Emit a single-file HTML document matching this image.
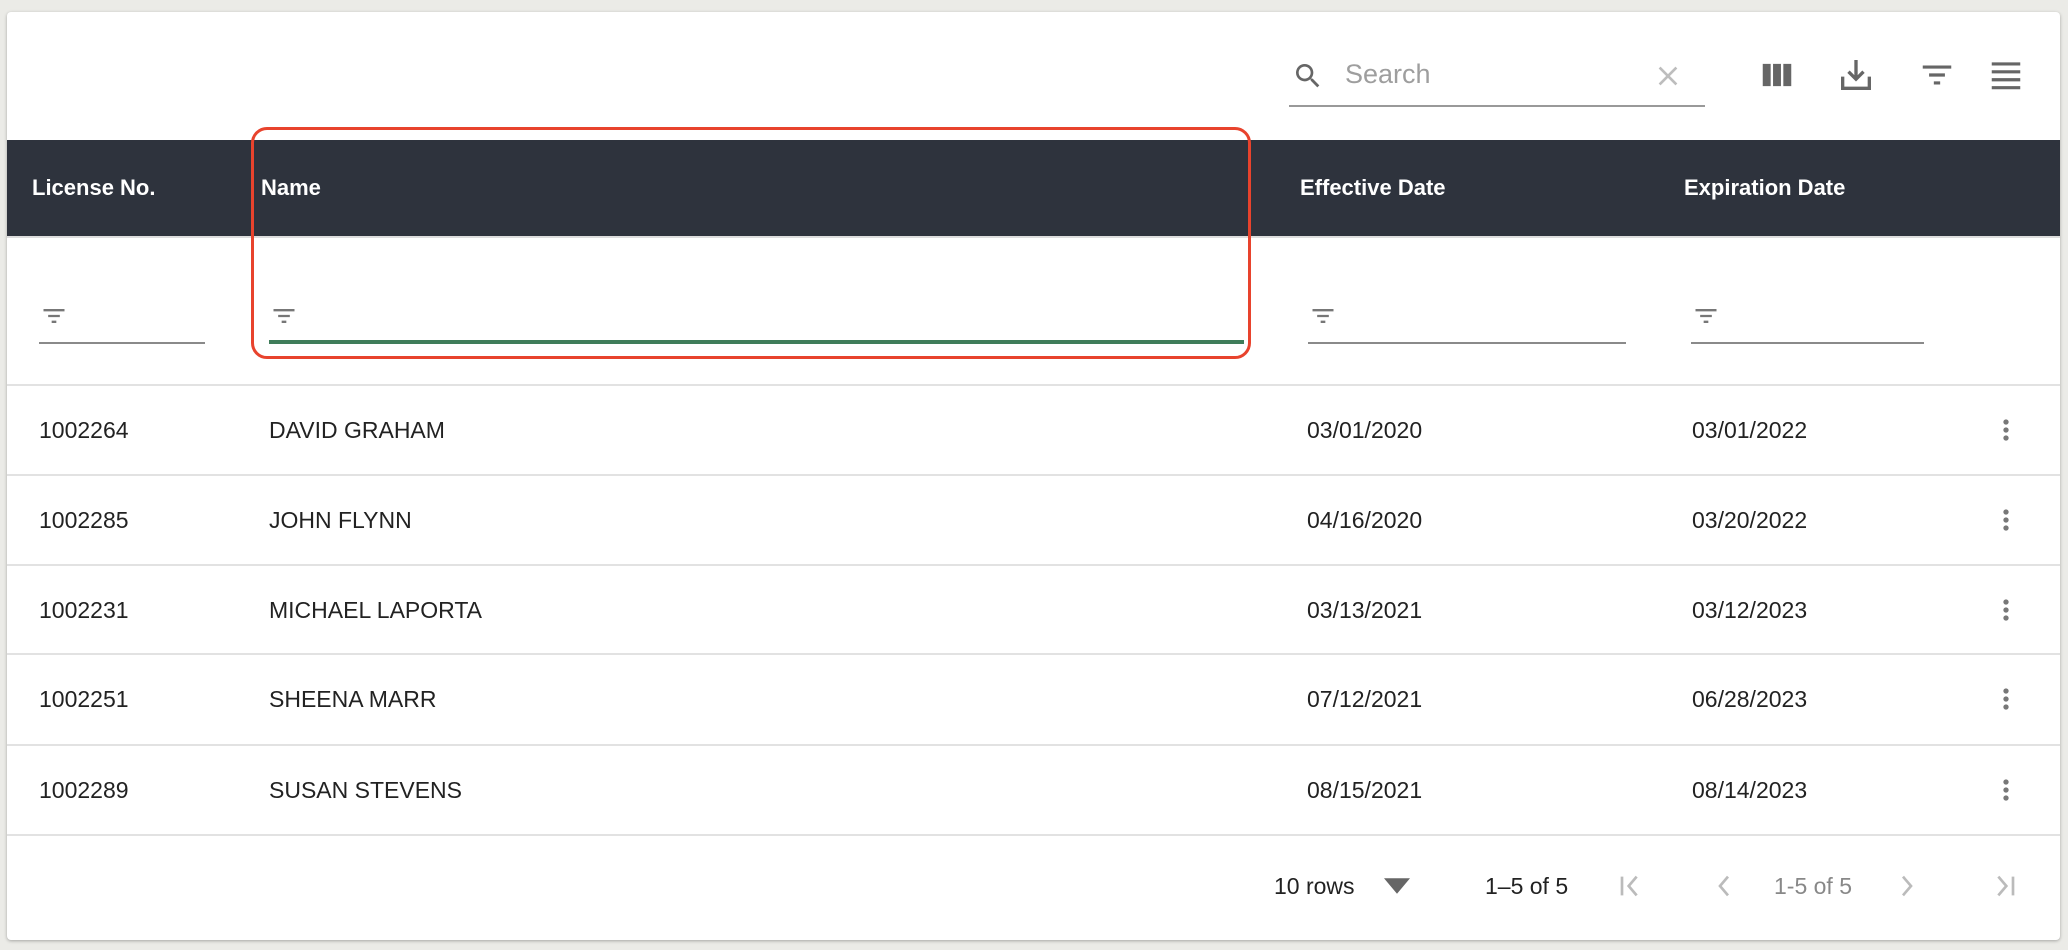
<!DOCTYPE html>
<html><head><style>
*{margin:0;padding:0;box-sizing:border-box}
body{width:2068px;height:950px;background:#ebebe7;font-family:"Liberation Sans",Arial,sans-serif;position:relative;overflow:hidden}
.card{position:absolute;left:7px;top:12px;width:2053px;height:928px;background:#fff;border-radius:4px;box-shadow:0 1px 3px rgba(0,0,0,.3)}
.a{position:absolute}
.hd{position:absolute;left:7px;top:140px;width:2053px;height:96px;background:#2e333d}
.ht{position:absolute;top:176px;color:#fff;font-weight:bold;font-size:22px;line-height:24px}
.dt{position:absolute;font-size:23px;color:#222;line-height:24px}
.sep{position:absolute;left:7px;width:2053px;height:2px;background:#e2e2e2}
.ul{position:absolute;top:342px;height:2px;background:#8a8a8a}
.pg{position:absolute;top:873px;font-size:23px;line-height:26px}
</style></head><body>
<div class="card"></div>
<!-- toolbar -->
<svg class="a" style="left:1292px;top:60px" width="32" height="32" viewBox="0 0 24 24"><path fill="#666" d="M15.5 14h-.79l-.28-.27A6.47 6.47 0 0016 9.5 6.5 6.5 0 109.5 16c1.61 0 3.09-.59 4.23-1.57l.27.28v.79l5 4.99L20.49 19l-4.99-5zm-6 0C7.01 14 5 11.99 5 9.5S7.01 5 9.5 5 14 7.01 14 9.5 11.99 14 9.5 14z"/></svg>
<div class="a" style="left:1345px;top:59px;font-size:27px;color:#9e9e9e">Search</div>
<svg class="a" style="left:1652px;top:60px" width="32" height="32" viewBox="0 0 24 24"><path fill="#bdbdbd" d="M19 6.41L17.59 5 12 10.59 6.41 5 5 6.41 10.59 12 5 17.59 6.41 19 12 13.41 17.59 19 19 17.59 13.41 12z"/></svg>
<div class="a" style="left:1289px;top:105px;width:416px;height:2px;background:#999"></div>
<svg class="a" style="left:1758px;top:56px" width="38" height="38" viewBox="0 0 24 24"><path fill="#666" d="M3 5h5v14H3zM9.5 5h5v14h-5zM16 5h5v14h-5z"/></svg>
<svg class="a" style="left:1836px;top:55px" width="40" height="40" viewBox="0 0 24 24"><path fill="none" stroke="#666" stroke-width="2" d="M12 3v11M7.5 10l4.5 4.5 4.5-4.5M4 13v7h16v-7"/></svg>
<svg class="a" style="left:1918px;top:56px" width="38" height="38" viewBox="0 0 24 24"><path fill="#666" d="M3 6h18v2H3zM7 11h10v2H7zM10 16h4v2h-4z"/></svg>
<svg class="a" style="left:1987px;top:56px" width="38" height="38" viewBox="0 0 24 24"><path fill="#666" d="M3 4h18v2H3zM3 9h18v2H3zM3 14h18v2H3zM3 19h18v2H3z"/></svg>
<!-- header -->
<div class="hd"></div>
<div class="ht" style="left:32px">License No.</div>
<div class="ht" style="left:261px">Name</div>
<div class="ht" style="left:1300px">Effective Date</div>
<div class="ht" style="left:1684px">Expiration Date</div>
<div class="sep" style="top:236px;height:2px;background:#ddd"></div>
<!-- filter row -->
<svg class="a" style="left:40px;top:302px" width="28" height="28" viewBox="0 0 24 24"><path fill="#777" d="M3 6h18v2H3zM7 11h10v2H7zM10 16h4v2h-4z"/></svg>
<svg class="a" style="left:270px;top:302px" width="28" height="28" viewBox="0 0 24 24"><path fill="#777" d="M3 6h18v2H3zM7 11h10v2H7zM10 16h4v2h-4z"/></svg>
<svg class="a" style="left:1309px;top:302px" width="28" height="28" viewBox="0 0 24 24"><path fill="#777" d="M3 6h18v2H3zM7 11h10v2H7zM10 16h4v2h-4z"/></svg>
<svg class="a" style="left:1692px;top:302px" width="28" height="28" viewBox="0 0 24 24"><path fill="#777" d="M3 6h18v2H3zM7 11h10v2H7zM10 16h4v2h-4z"/></svg>
<div class="ul" style="left:39px;width:166px"></div>
<div class="ul" style="left:269px;width:975px;height:4px;top:340px;background:#3f7d5a"></div>
<div class="ul" style="left:1308px;width:318px"></div>
<div class="ul" style="left:1691px;width:233px"></div>
<div class="a" style="left:251px;top:127px;width:1000px;height:232px;border:3px solid #e8432d;border-radius:16px"></div>
<!-- rows -->
<div class="sep" style="top:384px"></div>
<div class="sep" style="top:474px"></div>
<div class="sep" style="top:564px"></div>
<div class="sep" style="top:653px"></div>
<div class="sep" style="top:744px"></div>
<div class="sep" style="top:834px"></div>

<div class="dt" style="left:39px;top:418px">1002264</div><div class="dt" style="left:269px;top:418px">DAVID GRAHAM</div><div class="dt" style="left:1307px;top:418px">03/01/2020</div><div class="dt" style="left:1692px;top:418px">03/01/2022</div>
<div class="dt" style="left:39px;top:508px">1002285</div><div class="dt" style="left:269px;top:508px">JOHN FLYNN</div><div class="dt" style="left:1307px;top:508px">04/16/2020</div><div class="dt" style="left:1692px;top:508px">03/20/2022</div>
<div class="dt" style="left:39px;top:598px">1002231</div><div class="dt" style="left:269px;top:598px">MICHAEL LAPORTA</div><div class="dt" style="left:1307px;top:598px">03/13/2021</div><div class="dt" style="left:1692px;top:598px">03/12/2023</div>
<div class="dt" style="left:39px;top:687px">1002251</div><div class="dt" style="left:269px;top:687px">SHEENA MARR</div><div class="dt" style="left:1307px;top:687px">07/12/2021</div><div class="dt" style="left:1692px;top:687px">06/28/2023</div>
<div class="dt" style="left:39px;top:778px">1002289</div><div class="dt" style="left:269px;top:778px">SUSAN STEVENS</div><div class="dt" style="left:1307px;top:778px">08/15/2021</div><div class="dt" style="left:1692px;top:778px">08/14/2023</div>

<svg class="a" style="left:1990px;top:414px" width="32" height="32" viewBox="0 0 24 24"><path fill="#777" d="M12 8a2 2 0 100-4 2 2 0 000 4zm0 2a2 2 0 100 4 2 2 0 000-4zm0 6a2 2 0 100 4 2 2 0 000-4z"/></svg>
<svg class="a" style="left:1990px;top:504px" width="32" height="32" viewBox="0 0 24 24"><path fill="#777" d="M12 8a2 2 0 100-4 2 2 0 000 4zm0 2a2 2 0 100 4 2 2 0 000-4zm0 6a2 2 0 100 4 2 2 0 000-4z"/></svg>
<svg class="a" style="left:1990px;top:594px" width="32" height="32" viewBox="0 0 24 24"><path fill="#777" d="M12 8a2 2 0 100-4 2 2 0 000 4zm0 2a2 2 0 100 4 2 2 0 000-4zm0 6a2 2 0 100 4 2 2 0 000-4z"/></svg>
<svg class="a" style="left:1990px;top:683px" width="32" height="32" viewBox="0 0 24 24"><path fill="#777" d="M12 8a2 2 0 100-4 2 2 0 000 4zm0 2a2 2 0 100 4 2 2 0 000-4zm0 6a2 2 0 100 4 2 2 0 000-4z"/></svg>
<svg class="a" style="left:1990px;top:774px" width="32" height="32" viewBox="0 0 24 24"><path fill="#777" d="M12 8a2 2 0 100-4 2 2 0 000 4zm0 2a2 2 0 100 4 2 2 0 000-4zm0 6a2 2 0 100 4 2 2 0 000-4z"/></svg>
<!-- pagination -->
<div class="pg" style="left:1274px;color:#222">10 rows</div>
<svg class="a" style="left:1384px;top:878px" width="26" height="16" viewBox="0 0 10 6"><path fill="#666" d="M0 0h10L5 6z"/></svg>
<div class="pg" style="left:1485px;color:#222">1–5 of 5</div>
<svg class="a" style="left:1614px;top:870px" width="32" height="32" viewBox="0 0 24 24"><path fill="none" stroke="#bbb" stroke-width="2" d="M6 5v14M17 5l-6 7 6 7"/></svg>
<svg class="a" style="left:1708px;top:870px" width="32" height="32" viewBox="0 0 24 24"><path fill="none" stroke="#bbb" stroke-width="2" d="M15 5l-6 7 6 7"/></svg>
<div class="pg" style="left:1774px;color:#888">1-5 of 5</div>
<svg class="a" style="left:1891px;top:870px" width="32" height="32" viewBox="0 0 24 24"><path fill="none" stroke="#bbb" stroke-width="2" d="M9 5l6 7-6 7"/></svg>
<svg class="a" style="left:1989px;top:870px" width="32" height="32" viewBox="0 0 24 24"><path fill="none" stroke="#bbb" stroke-width="2" d="M7 5l6 7-6 7M18 5v14"/></svg>
</body></html>
